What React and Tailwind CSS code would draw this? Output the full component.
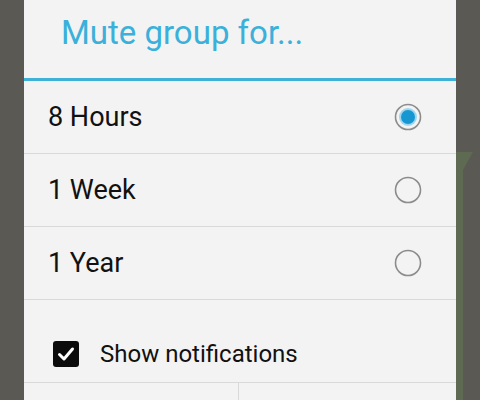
import React, { useState } from "react"

const options = ["8 Hours", "1 Week", "1 Year"]

function Radio({ checked }) {
  return (
    <svg width="28" height="28" viewBox="0 0 28 28">
      <circle cx="14" cy="14" r="12.5" fill="none" stroke="#8c8c8c" strokeWidth="1.6" />
      {checked && (
        <>
          <circle cx="14" cy="14" r="9" fill="#9fd6ee" />
          <circle cx="14" cy="14" r="7" fill="#1797d2" />
        </>
      )}
    </svg>
  )
}

function Checkbox({ checked }) {
  return (
    <div className="w-[26px] h-[26px] rounded-[3px] bg-[#0b0b0b] flex items-center justify-center">
      {checked && (
        <svg width="20" height="20" viewBox="0 0 20 20">
          <path
            d="M3.5 10.5 L8 15 L16.5 5"
            fill="none"
            stroke="#ffffff"
            strokeWidth="3"
            strokeLinecap="round"
            strokeLinejoin="round"
          />
        </svg>
      )}
    </div>
  )
}

export default function App() {
  const [selected, setSelected] = useState("8 Hours")
  const [notify, setNotify] = useState(true)

  return (
    <div
      className="relative w-[480px] h-[400px] overflow-hidden bg-[#5a5954] flex items-start"
      style={{ fontFamily: "Roboto, 'Noto Sans', sans-serif" }}
    >
      {/* map road peeking out behind the dialog */}
      <svg className="absolute left-[456px] top-[150px]" width="24" height="250" viewBox="0 0 24 250">
        <polygon points="0,2 17,2 7,20 7,250 0,250" fill="#5f6a52" />
      </svg>

      <div className="relative mx-[24px] w-[432px] bg-[#f3f3f3] flex flex-col">
        <div className="h-[78px] pl-[37px] pt-[16px]">
          <div className="text-[33px] leading-[33px] text-[#3ab0da]">Mute group for...</div>
        </div>
        <div className="h-[3px] bg-[#3fb0d6]" />

        {options.map((opt) => (
          <div key={opt} className="border-b border-[#d9d9d9]">
            <div
              onClick={() => setSelected(opt)}
              className="h-[72px] pl-[24px] pr-[34px] flex items-center justify-between"
            >
              <span className="text-[27px] text-[#111111]">{opt}</span>
              <Radio checked={selected === opt} />
            </div>
          </div>
        ))}

        <div
          onClick={() => setNotify(!notify)}
          className="h-[83px] pl-[29px] pt-[25px] flex items-center gap-[21px] border-b border-[#d9d9d9]"
        >
          <Checkbox checked={notify} />
          <span className="text-[24px] text-[#111111]">Show notifications</span>
        </div>

        <div className="flex h-[40px]">
          <div className="w-[215px] border-r border-[#d9d9d9]" />
          <div className="flex-1" />
        </div>
      </div>
    </div>
  )
}
